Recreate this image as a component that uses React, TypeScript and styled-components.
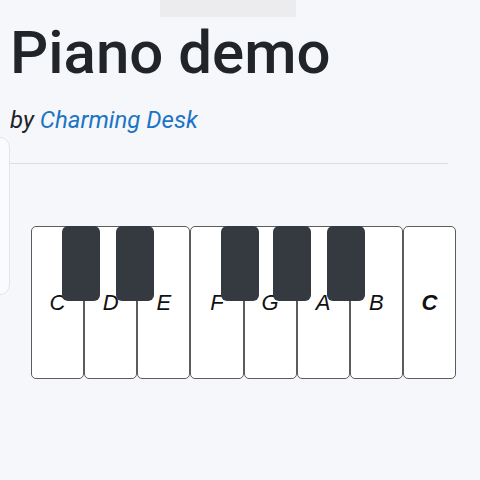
import React from 'react';
import styled, { createGlobalStyle } from 'styled-components';

const GlobalStyle = createGlobalStyle`
  html, body {
    margin: 0;
    padding: 0;
    background: #f6f7fb;
    font-family: Roboto, "Liberation Sans", sans-serif;
    color: #212529;
  }
`;

const Page = styled.div`
  position: relative;
  width: 480px;
  height: 480px;
  overflow: hidden;
  padding: 17px 32px 0 10px;
  box-sizing: border-box;
`;

const TopTab = styled.div`
  position: absolute;
  top: 0;
  left: 160px;
  width: 136px;
  height: 17px;
  background: #ececee;
`;

const SideCard = styled.div`
  position: absolute;
  left: -12px;
  top: 137px;
  width: 20px;
  height: 156px;
  border: 1px solid #e3e4ea;
  border-radius: 10px;
  background: #fafbfd;
`;

const Title = styled.h1`
  margin: 0;
  font-size: 60px;
  font-weight: 500;
  line-height: 1.2;
`;

const Byline = styled.p`
  margin: 13px 0 0;
  font-size: 24px;
  font-style: italic;
  line-height: 1.5;
`;

const AuthorLink = styled.a`
  color: #1b74c4;
  text-decoration: none;
`;

const Divider = styled.hr`
  margin: 25px 0 0;
  border: 0;
  border-top: 1px solid #dcdde3;
`;

const Piano = styled.div`
  position: relative;
  display: flex;
  margin: 62px 0 0 21px;
  width: 425px;
  height: 153px;
`;

const WhiteKey = styled.div<{ $bold?: boolean }>`
  flex: 1;
  display: flex;
  align-items: center;
  justify-content: center;
  background: #fff;
  border: 1px solid #5c5c5c;
  border-radius: 5px;
  font-family: "Liberation Sans", Arial, sans-serif;
  font-style: italic;
  font-size: 22px;
  font-weight: ${p => (p.$bold ? 700 : 400)};
  color: #111;
`;

const BlackKey = styled.div`
  position: absolute;
  top: 0;
  width: 38px;
  height: 75px;
  background: #343a40;
  border-radius: 6px;
`;

const whiteKeys = ['C', 'D', 'E', 'F', 'G', 'A', 'B', 'C'];
const blackKeyOffsets = [31, 85, 190, 242, 296];

export default function App() {
  return (
    <>
      <GlobalStyle />
      <Page>
        <TopTab />
        <SideCard />
        <Title>Piano demo</Title>
        <Byline>
          by <AuthorLink href="#">Charming Desk</AuthorLink>
        </Byline>
        <Divider />
        <Piano>
          {whiteKeys.map((note, i) => (
            <WhiteKey key={i} $bold={i === whiteKeys.length - 1}>
              {note}
            </WhiteKey>
          ))}
          {blackKeyOffsets.map(left => (
            <BlackKey key={left} style={{ left }} />
          ))}
        </Piano>
      </Page>
    </>
  );
}
